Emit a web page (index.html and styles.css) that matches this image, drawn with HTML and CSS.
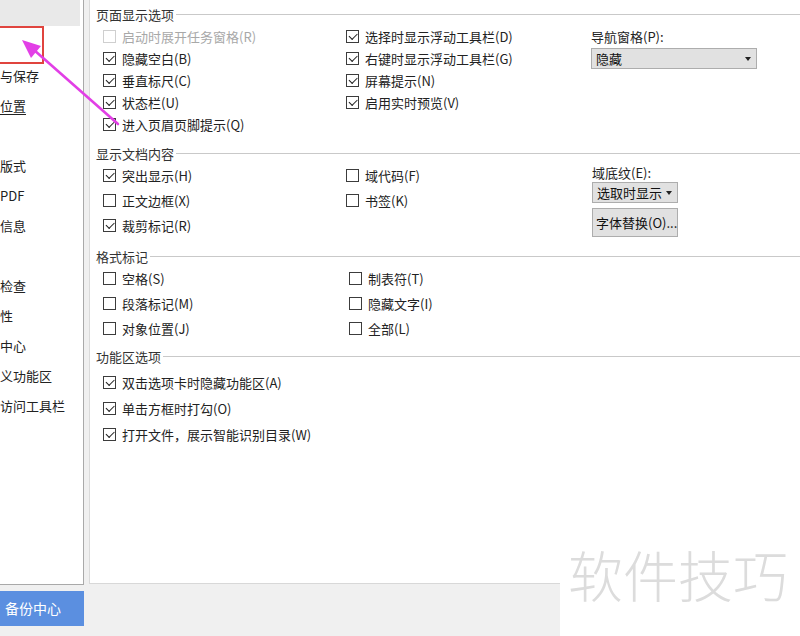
FILE: index.html
```html
<!DOCTYPE html>
<html lang="zh-CN">
<head>
<meta charset="utf-8">
<title>选项 - 视图</title>
<link rel="stylesheet" href="styles.css">
</head>
<body>
<div class="window">
  <aside class="nav">
    <ul class="nav-list">
      <li class="nav-item sel"></li>
      <li class="nav-item"></li>
      <li class="nav-item">与保存</li>
      <li class="nav-item"><span class="ul">位置</span></li>
      <li class="nav-item"></li>
      <li class="nav-item">版式</li>
      <li class="nav-item">PDF</li>
      <li class="nav-item">信息</li>
      <li class="nav-item"></li>
      <li class="nav-item">检查</li>
      <li class="nav-item">性</li>
      <li class="nav-item">中心</li>
      <li class="nav-item">义功能区</li>
      <li class="nav-item">访问工具栏</li>
    </ul>
  </aside>

  <main class="panel">
    <div class="head h1"><span class="head-text">页面显示选项</span><span class="head-line"></span></div>
    <div class="cols s1">
      <div class="col c1">
        <div class="opt dis"><span class="cb"></span>启动时展开任务窗格(R)</div>
        <div class="opt"><span class="cb on"></span>隐藏空白(B)</div>
        <div class="opt"><span class="cb on"></span>垂直标尺(C)</div>
        <div class="opt"><span class="cb on"></span>状态栏(U)</div>
        <div class="opt"><span class="cb on"></span>进入页眉页脚提示(Q)</div>
      </div>
      <div class="col c2">
        <div class="opt"><span class="cb on"></span>选择时显示浮动工具栏(D)</div>
        <div class="opt"><span class="cb on"></span>右键时显示浮动工具栏(G)</div>
        <div class="opt"><span class="cb on"></span>屏幕提示(N)</div>
        <div class="opt"><span class="cb on"></span>启用实时预览(V)</div>
      </div>
      <div class="col c3">
        <div class="label l1">导航窗格(P):</div>
        <div class="select wide">隐藏<span class="caret"></span></div>
      </div>
    </div>

    <div class="head h2"><span class="head-text">显示文档内容</span><span class="head-line"></span></div>
    <div class="cols s2">
      <div class="col c1">
        <div class="opt"><span class="cb on"></span>突出显示(H)</div>
        <div class="opt"><span class="cb"></span>正文边框(X)</div>
        <div class="opt"><span class="cb on"></span>裁剪标记(R)</div>
      </div>
      <div class="col c2">
        <div class="opt"><span class="cb"></span>域代码(F)</div>
        <div class="opt"><span class="cb"></span>书签(K)</div>
      </div>
      <div class="col c3 shift">
        <div class="label l2">域底纹(E):</div>
        <div class="select narrow">选取时显示<span class="caret"></span></div>
        <div class="button">字体替换(O)...</div>
      </div>
    </div>

    <div class="head h3"><span class="head-text">格式标记</span><span class="head-line"></span></div>
    <div class="cols s3">
      <div class="col c1 c1b">
        <div class="opt"><span class="cb"></span>空格(S)</div>
        <div class="opt"><span class="cb"></span>段落标记(M)</div>
        <div class="opt"><span class="cb"></span>对象位置(J)</div>
      </div>
      <div class="col c2">
        <div class="opt"><span class="cb"></span>制表符(T)</div>
        <div class="opt"><span class="cb"></span>隐藏文字(I)</div>
        <div class="opt"><span class="cb"></span>全部(L)</div>
      </div>
    </div>

    <div class="head h4"><span class="head-text">功能区选项</span><span class="head-line"></span></div>
    <div class="cols s4">
      <div class="col c1">
        <div class="opt"><span class="cb on"></span>双击选项卡时隐藏功能区(A)</div>
        <div class="opt"><span class="cb on"></span>单击方框时打勾(O)</div>
        <div class="opt"><span class="cb on"></span>打开文件，展示智能识别目录(W)</div>
      </div>
    </div>
  </main>

  <div class="backup">备份中心</div>
</div>

<div class="watermark">软件技巧</div>
<div class="redbox"></div>
<svg class="arrow" width="800" height="636" viewBox="0 0 800 636" aria-hidden="true">
  <line x1="118" y1="124" x2="34" y2="50" stroke="#e23fe6" stroke-width="2.6" stroke-linecap="round"/>
  <polygon points="22,40 41,46 31,58" fill="#e23fe6"/>
</svg>
</body>
</html>
```

FILE: styles.css
```css
* { box-sizing: border-box; }
html, body { margin: 0; padding: 0; }
body {
  width: 800px;
  height: 636px;
  overflow: hidden;
  background: #f0f0f0;
  font-family: "Noto Sans CJK SC", "Noto Sans", sans-serif;
  font-size: 13px;
  color: #222;
  position: relative;
}

.window {
  display: grid;
  grid-template-columns: 84px 1fr;
  grid-template-rows: 585px 35px;
  column-gap: 5px;
  row-gap: 6px;
}

/* left navigation */
.nav {
  grid-column: 1;
  grid-row: 1;
  background: #fff;
  border-right: 1px solid #a9a9a9;
  border-bottom: 1px solid #a9a9a9;
  overflow: hidden;
}
.nav-list { list-style: none; margin: 0; padding: 0; }
.nav-item {
  height: 30px;
  line-height: 30px;
  white-space: nowrap;
  color: #222;
}
.nav-item.sel {
  height: 26px;
  margin-bottom: 5px;
  margin-right: 3px;
  background: #e9e9e9;
}
.ul { text-decoration: underline; text-underline-offset: 3px; }

.backup {
  grid-column: 1;
  grid-row: 2;
  background: #5b8fe0;
  color: #fff;
  font-size: 14px;
  line-height: 35px;
  padding-left: 5px;
}

/* right panel */
.panel {
  grid-column: 2;
  grid-row: 1;
  height: 584px;
  background: #fff;
  border-left: 1px solid #dadada;
  border-bottom: 1px solid #d8d8d8;
  padding: 4px 0 0 6px;
}

.head {
  display: flex;
  align-items: center;
  height: 20px;
  color: #333;
}
.head-line {
  flex: 1;
  height: 0;
  border-top: 1px solid #c9c9c9;
  margin-left: 2px;
}
.h2 { margin-top: 8px; }
.h3 { margin-top: 8px; }
.h4 { margin-top: 5px; }

.cols { display: flex; padding-left: 7px; }
.s1 { margin-top: 1px; }
.s4 { margin-top: 3px; }

.c1 { width: 243px; }
.c1b { width: 246px; }
.c2 { width: 245px; }
.c3 { flex: 1; }
.shift { padding-left: 1px; }

.opt {
  display: flex;
  align-items: center;
  gap: 6px;
  white-space: nowrap;
}
.s1 .opt { height: 22px; }
.s2 .opt, .s3 .opt { height: 25px; }
.s4 .opt { height: 26px; }
.opt.dis { color: #a8a8a8; }

.cb {
  position: relative;
  flex: none;
  width: 13px;
  height: 13px;
  border: 1px solid #3c3c3c;
  background: #fff;
}
.opt.dis .cb { border-color: #cfcfcf; }
.cb.on::after {
  content: "";
  position: absolute;
  left: 2px;
  top: 2px;
  width: 7px;
  height: 3.5px;
  border-left: 1px solid #222;
  border-bottom: 1px solid #222;
  transform: rotate(-45deg);
}

.label { line-height: 18px; color: #222; }
.l1 { margin-top: 3px; margin-bottom: 2px; }
.l2 { margin-top: 1px; }

.select {
  position: relative;
  height: 21px;
  line-height: 19px;
  background: #e1e1e1;
  border: 1px solid #adadad;
  padding-left: 4px;
  color: #111;
}
.select.wide { width: 166px; }
.select.narrow { width: 86px; }
.caret {
  position: absolute;
  right: 5px;
  top: 8px;
  width: 0;
  height: 0;
  border-left: 3px solid transparent;
  border-right: 3px solid transparent;
  border-top: 4px solid #222;
}
.button {
  margin-top: 5px;
  width: 86px;
  height: 29px;
  line-height: 27px;
  background: #e1e1e1;
  border: 1px solid #adadad;
  padding-left: 3px;
  color: #111;
  white-space: nowrap;
}

/* overlays */
.watermark {
  position: absolute;
  left: 560px;
  top: 530px;
  width: 240px;
  height: 106px;
  background: #fff;
  color: #dcdcdc;
  font-size: 55px;
  font-weight: 300;
  line-height: 55px;
  padding: 16px 0 0 8px;
  white-space: nowrap;
}
.redbox {
  position: absolute;
  left: -2px;
  top: 26px;
  width: 46px;
  height: 38px;
  border: 2px solid #e0443e;
}
.arrow {
  position: absolute;
  left: 0;
  top: 0;
  pointer-events: none;
}
```
